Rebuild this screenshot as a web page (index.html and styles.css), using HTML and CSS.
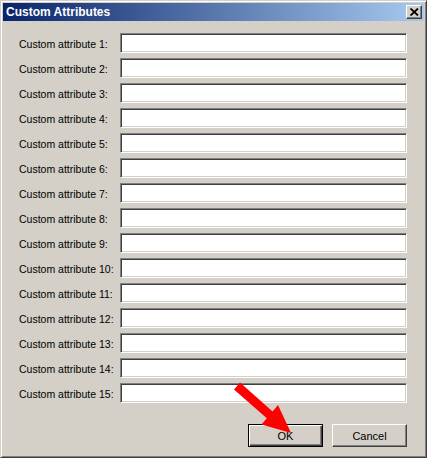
FILE: index.html
```html
<!DOCTYPE html>
<html>
<head>
<meta charset="utf-8">
<link rel="stylesheet" href="styles.css">
</head>
<body>
<div class="window">
  <div class="titlebar">
    <span class="title">Custom Attributes</span>
    <button class="close" aria-label="Close">
      <svg width="9" height="8" viewBox="0 0 9 8"><path d="M0.5 0.5 L8 7.5 M8 0.5 L0.5 7.5" stroke="#000" stroke-width="1.8" fill="none"/></svg>
    </button>
  </div>
  <div class="body">
    <div class="form">
      <label class="lbl">Custom attribute 1:</label><div class="field"></div>
      <label class="lbl">Custom attribute 2:</label><div class="field"></div>
      <label class="lbl">Custom attribute 3:</label><div class="field"></div>
      <label class="lbl">Custom attribute 4:</label><div class="field"></div>
      <label class="lbl">Custom attribute 5:</label><div class="field"></div>
      <label class="lbl">Custom attribute 6:</label><div class="field"></div>
      <label class="lbl">Custom attribute 7:</label><div class="field"></div>
      <label class="lbl">Custom attribute 8:</label><div class="field"></div>
      <label class="lbl">Custom attribute 9:</label><div class="field"></div>
      <label class="lbl">Custom attribute 10:</label><div class="field"></div>
      <label class="lbl">Custom attribute 11:</label><div class="field"></div>
      <label class="lbl">Custom attribute 12:</label><div class="field"></div>
      <label class="lbl">Custom attribute 13:</label><div class="field"></div>
      <label class="lbl">Custom attribute 14:</label><div class="field"></div>
      <label class="lbl">Custom attribute 15:</label><div class="field"></div>
    </div>
    <div class="buttons">
      <div class="btn default"><span>OK</span></div>
      <div class="btn"><span>Cancel</span></div>
    </div>
  </div>
  <svg class="arrow" width="427" height="458" viewBox="0 0 427 458">
    <path d="M240 382.5 L272.6 411.4 L278 405 L291 433 L261.5 424.5 L266.8 418.2 L234 389.5 Z" fill="#f00"/>
  </svg>
</div>
</body>
</html>
```
FILE: styles.css
```css
* { box-sizing: border-box; }
html, body { margin: 0; padding: 0; }
body {
  width: 427px;
  height: 458px;
  background: #d4d0c8;
  font-family: "Liberation Sans", Arial, sans-serif;
  overflow: hidden;
}
.window {
  position: relative;
  width: 427px;
  height: 458px;
  background: #d4d0c8;
  border-top: 1px solid #d4d0c8;
  border-left: 1px solid #d4d0c8;
  border-right: 1px solid #404040;
  border-bottom: 1px solid #404040;
  box-shadow: inset 1px 1px 0 #fff, inset -1px -1px 0 #808080;
  padding: 2px;
  display: flex;
  flex-direction: column;
}
.titlebar {
  height: 18px;
  background: linear-gradient(to right, #0a246a, #a6caf0);
  display: flex;
  align-items: center;
  justify-content: space-between;
  padding: 0 2px 0 3px;
}
.title {
  color: #fff;
  font-weight: bold;
  font-size: 12px;
}
.close {
  width: 16px;
  height: 14px;
  padding: 0;
  margin: 0;
  background: #d4d0c8;
  border: 1px solid;
  border-color: #fff #404040 #404040 #fff;
  box-shadow: inset -1px -1px 0 #808080;
  display: flex;
  align-items: center;
  justify-content: center;
}
.body {
  flex: 1;
  display: flex;
  flex-direction: column;
  padding: 12px 17px 0 16px;
}
.form {
  display: grid;
  grid-template-columns: 101px 287px;
  grid-auto-rows: 20px;
  row-gap: 5px;
  align-items: center;
}
.lbl {
  font-size: 10.5px;
  color: #000;
  white-space: nowrap;
  padding-top: 1px;
}
.field {
  height: 20px;
  background: #fff;
  border: 1px solid;
  border-color: #808080 #fff #fff #808080;
  box-shadow: inset 1px 1px 0 #404040, inset -1px -1px 0 #d4d0c8;
}
.buttons {
  display: flex;
  justify-content: flex-end;
  gap: 9px;
  margin-top: 21px;
}
.btn {
  width: 75px;
  height: 23px;
  background: #d4d0c8;
  border: 1px solid;
  border-color: #fff #404040 #404040 #fff;
  box-shadow: inset -1px -1px 0 #808080;
  display: flex;
  align-items: center;
  justify-content: center;
  font-size: 11px;
  color: #000;
}
.btn.default {
  border: 1px solid #000;
  box-shadow: inset 1px 1px 0 #fff, inset -1px -1px 0 #404040, inset -2px -2px 0 #808080;
}
.arrow {
  position: absolute;
  left: -1px;
  top: -1px;
  pointer-events: none;
}
```
